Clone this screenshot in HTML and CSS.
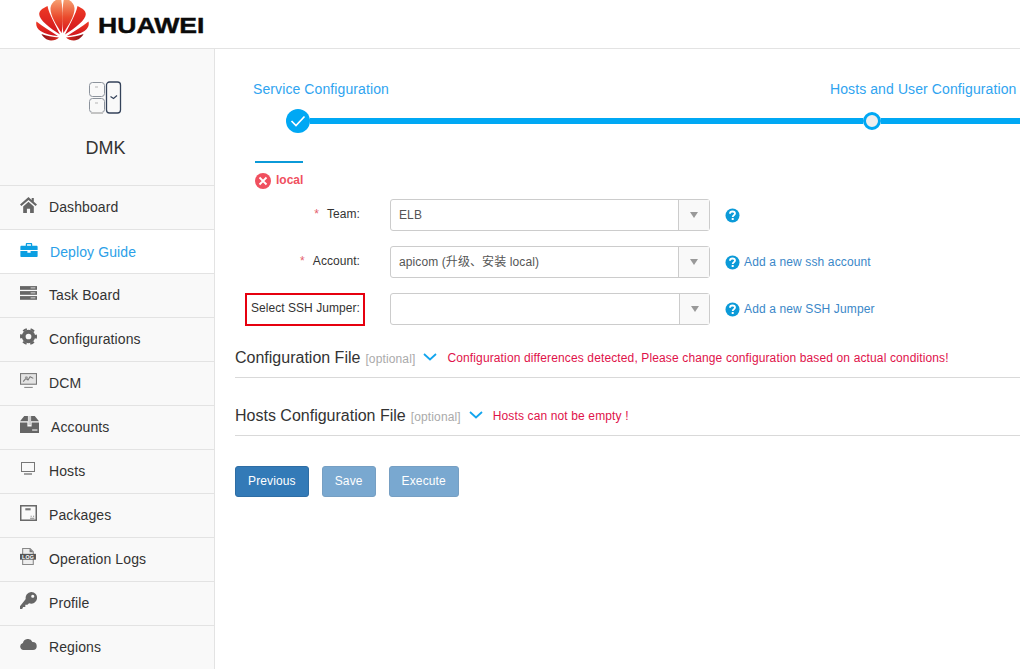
FILE: index.html
```html
<!DOCTYPE html>
<html lang="en">

<head>
	<meta name="viewport" content="width=device-width, initial-scale=1">
	<meta charset="utf-8">
	<title>DMK</title>
	<link rel="stylesheet" href="styles.css">
</head>

<body>
	<header class="topbar">
		<svg class="logo-mark" width="54" height="41" viewBox="0 0 54 41">
			<defs>
				<linearGradient id="petal-top" x1="0" y1="0" x2="0" y2="1">
					<stop offset="0" stop-color="#f7a878"></stop>
					<stop offset="0.55" stop-color="#ea4a2c"></stop>
					<stop offset="1" stop-color="#d8141c"></stop>
				</linearGradient>
				<linearGradient id="petal-mid" x1="0" y1="0" x2="0" y2="1">
					<stop offset="0" stop-color="#ee3a26"></stop>
					<stop offset="1" stop-color="#d0141c"></stop>
				</linearGradient>
				<linearGradient id="petal-low" x1="0" y1="0" x2="1" y2="0">
					<stop offset="0" stop-color="#8a0f14"></stop>
					<stop offset="1" stop-color="#e02a20"></stop>
				</linearGradient>
				<g id="petals">
					<path fill="url(#petal-top)" d="M25.600 33C20 25 14 15 14.500 8 15 3 19-0.500 25-2 26.800 8 27.300 22 25.600 33Z"></path>
					<path fill="url(#petal-mid)" d="M24 34.500C14 28 3 20 3.200 14 3.300 11 6 8.500 11.500 6 13 14 20 26 24 34.500Z"></path>
					<path fill="url(#petal-mid)" d="M22 36C14 31 7 26.500 .5 21.500-.5 25 1 28.500 4.500 31 9 34 16 35.800 22 36Z"></path>
					<path fill="url(#petal-low)" d="M23 37.500C17 37 10 36 5.500 34 7 37 10.500 40.300 15 40.500 18 40.600 21 39.500 23 37.500Z"></path>
				</g>
			</defs>
			<use href="#petals"></use>
			<use href="#petals" transform="matrix(-1 0 0 1 53 0)"></use>
		</svg>
		<span class="logo-word">HUAWEI</span>
	</header>

	<div class="layout">
		<aside class="sidebar">
			<div class="brand">
				<svg width="34" height="33" viewBox="0 0 34 33" fill="none">
					<rect x=".5" y="1.500" width="15" height="14" rx="3" stroke="#8c939c"></rect>
					<rect x=".5" y="17.500" width="15" height="14" rx="3" stroke="#8c939c"></rect>
					<path d="M2 32h12" stroke="#c4c4c4" stroke-width="2"></path>
					<path d="M6 6h3M6 22h3" stroke="#b5b5b5"></path>
					<rect x="17.500" y="1" width="14" height="31" rx="3" stroke="#34425a" stroke-width="1.300"></rect>
					<path d="M21.500 15.500l3 2 3.500-3" stroke="#34425a" stroke-width="1.200"></path>
				</svg>
				<div class="brand-name">DMK</div>
			</div>
			<ul class="nav">
				<li>
					<a href="#">
						<svg width="17" height="16" viewBox="0 0 16 15" fill="#666">
							<path d="M8 0L0 7l1.300 1.500L8 2.700l6.700 5.800L16 7l-3-2.600V1h-2v1.700z"></path>
							<path d="M3 9l5-4.500L13 9v6H9.500v-4h-3v4H3z"></path>
						</svg>
						Dashboard
					</a>
				</li>
				<li class="active">
					<a href="#">
						<svg width="18" height="14" viewBox="0 0 16 13" fill="#0b9fe2">
							<path d="M5 2.500V1c0-.6.400-1 1-1h4c.6 0 1 .4 1 1v1.500h4c.6 0 1 .4 1 1V6.500H0v-3c0-.6.400-1 1-1zm1.200 0h3.600V1.200H6.200z"></path>
							<path d="M0 7.500h6.500V9h3V7.500H16V12c0 .6-.4 1-1 1H1c-.6 0-1-.4-1-1z"></path>
						</svg>
						Deploy Guide
					</a>
				</li>
				<li>
					<a href="#">
						<svg width="17" height="14" viewBox="0 0 16 13" fill="#666">
							<rect width="16" height="3.500"></rect>
							<rect y="4.700" width="16" height="3.500"></rect>
							<rect y="9.400" width="16" height="3.500"></rect>
							<path d="M10 1.700h4.500M10 6.400h4.500M10 11.100h4.500" stroke="#eee" stroke-width=".8"></path>
						</svg>
						Task Board
					</a>
				</li>
				<li>
					<a href="#">
						<svg width="17" height="17" viewBox="0 0 16 16" fill="none" stroke="#666">
							<circle cx="8" cy="8" r="4.500" stroke-width="3.600"></circle>
							<circle cx="8" cy="8" r="7" stroke-width="2" stroke-dasharray="3.800 3.530" stroke-dashoffset="1.900"></circle>
						</svg>
						Configurations
					</a>
				</li>
				<li>
					<a href="#">
						<svg width="17" height="15" viewBox="0 0 16 14">
							<rect x=".5" y=".5" width="15" height="10" fill="#e4e4e4" stroke="#777"></rect>
							<path d="M3 8l2.500-3 2 1.500 2-3 3 1.500" fill="none" stroke="#777"></path>
							<circle cx="6" cy="4.500" r="1.500" fill="#999"></circle>
							<path d="M4 13.500h8" stroke="#888"></path>
						</svg>
						DCM
					</a>
				</li>
				<li>
					<a href="#">
						<svg width="19" height="17" viewBox="0 0 18 16" fill="#666">
							<path d="M4 0h3.500v5H0zM10.500 0H14l4 5h-7.500z"></path>
							<path d="M0 6h7v4h4V6h7v10H0z"></path>
							<path d="M8.200 0h.8v8.500h-.8zM10 0h-.5v8.500h.5z" fill="#aaa"></path>
							<rect x="11.500" y="12.500" width="5" height="1.500" fill="#ccc"></rect>
						</svg>
						Accounts
					</a>
				</li>
				<li>
					<a href="#">
						<svg width="17" height="13" viewBox="0 0 17 13" fill="none" stroke="#666">
							<rect x="1.500" y=".5" width="13" height="9" stroke="#777"></rect>
							<path d="M4 12h8" stroke-width="1.200"></path>
						</svg>
						Hosts
					</a>
				</li>
				<li>
					<a href="#">
						<svg width="17" height="16" viewBox="0 0 16 15" fill="none">
							<rect x=".7" y=".7" width="14.600" height="13.600" stroke="#666" stroke-width="1.400"></rect>
							<rect x="5" y="3" width="5" height="2" fill="#777"></rect>
							<path d="M10 10.500h1M12.300 10.500h1M9.500 12.500h4" stroke="#888"></path>
						</svg>
						Packages
					</a>
				</li>
				<li>
					<a href="#">
						<svg width="17" height="17" viewBox="0 0 16 16">
							<path d="M2.500.5H9.500L12.500 3.500V15.500H2.500z" fill="#eee" stroke="#888"></path>
							<path d="M9 .5V4h3.500z" fill="#777"></path>
							<rect y="5.500" width="15" height="5.500" fill="#555"></rect>
							<text class="log-tag" x="7.500" y="10">LOG</text>
						</svg>
						Operation Logs
					</a>
				</li>
				<li>
					<a href="#">
						<svg width="17" height="17" viewBox="0 0 16 16" fill="#666">
							<path fill-rule="evenodd" d="M10.500 0a5.500 5.500 0 1 1-2 10.600L7 12H5v2H3l-1 2H0v-2.500l5.400-6.900A5.500 5.500 0 0 1 10.500 0zm1.500 2.500a1.500 1.500 0 1 0 0 3 1.500 1.500 0 0 0 0-3z"></path>
						</svg>
						Profile
					</a>
				</li>
				<li>
					<a href="#">
						<svg width="17" height="11" viewBox="0 0 17 11" fill="#666">
							<path d="M3.500 11a3.500 3.500 0 0 1-.6-6.900A5 5 0 0 1 12.400 3 4 4 0 0 1 13 11z"></path>
						</svg>
						Regions
					</a>
				</li>
			</ul>
		</aside>

		<main class="content">
			<div class="step-labels">
				<span>Service Configuration</span>
				<span>Hosts and User Configuration</span>
			</div>
			<div class="step-track">
				<span class="step-done">
					<svg width="16" height="12" viewBox="0 0 16 12" fill="none" stroke="#fff" stroke-width="1.700">
						<path d="M1.500 6l4.500 4.500L14.500 1.500"></path>
					</svg>
				</span>
				<span class="step-line step-line-first"></span>
				<span class="step-current"></span>
				<span class="step-line"></span>
			</div>

			<div class="host-tab">
				<svg width="16" height="16" viewBox="0 0 16 16">
					<circle cx="8" cy="8" r="8" fill="#f0505f"></circle>
					<path d="M4.500 4.500l7 7M11.500 4.500l-7 7" stroke="#fff" stroke-width="1.800"></path>
				</svg>
				<span class="host-name">local</span>
			</div>

			<form class="host-form">
				<div class="form-row">
					<label class="form-label"><span class="required">*</span>Team:</label>
					<div class="select">
						<span class="select-value">ELB</span>
						<span class="select-arrow"></span>
					</div>
					<span class="form-help">
						<svg class="help-icon" width="15" height="15" viewBox="0 0 15 15">
							<circle cx="7.500" cy="7.500" r="7" fill="#0b9ad8"></circle>
							<path d="M5 5.800C5 4.300 6.100 3.500 7.500 3.500S10 4.300 10 5.600C10 7.300 7.700 7.300 7.700 9" fill="none" stroke="#fff" stroke-width="1.800"></path>
							<rect x="6.700" y="10" width="2" height="2" fill="#fff"></rect>
						</svg>
					</span>
				</div>
				<div class="form-row">
					<label class="form-label"><span class="required">*</span>Account:</label>
					<div class="select">
						<span class="select-value">apicom (升级、安装 local)</span>
						<span class="select-arrow"></span>
					</div>
					<a class="form-help" href="#">
						<svg class="help-icon" width="15" height="15" viewBox="0 0 15 15">
							<circle cx="7.500" cy="7.500" r="7" fill="#0b9ad8"></circle>
							<path d="M5 5.800C5 4.300 6.100 3.500 7.500 3.500S10 4.300 10 5.600C10 7.300 7.700 7.300 7.700 9" fill="none" stroke="#fff" stroke-width="1.800"></path>
							<rect x="6.700" y="10" width="2" height="2" fill="#fff"></rect>
						</svg>
						Add a new ssh account
					</a>
				</div>
				<div class="form-row">
					<label class="form-label"><span class="label-marked">Select SSH Jumper:</span></label>
					<div class="select select-empty">
						<span class="select-value"></span>
						<span class="select-arrow"></span>
					</div>
					<a class="form-help" href="#">
						<svg class="help-icon" width="15" height="15" viewBox="0 0 15 15">
							<circle cx="7.500" cy="7.500" r="7" fill="#0b9ad8"></circle>
							<path d="M5 5.800C5 4.300 6.100 3.500 7.500 3.500S10 4.300 10 5.600C10 7.300 7.700 7.300 7.700 9" fill="none" stroke="#fff" stroke-width="1.800"></path>
							<rect x="6.700" y="10" width="2" height="2" fill="#fff"></rect>
						</svg>
						Add a new SSH Jumper
					</a>
				</div>
			</form>

			<section class="file-section">
				<h2>Configuration File</h2>
				<span class="optional">[optional]</span>
				<svg class="chevron" width="14" height="8" viewBox="0 0 14 8" fill="none" stroke="#12a5ee" stroke-width="1.800">
					<path d="M1 1l6 5.500L13 1"></path>
				</svg>
				<span class="file-error">Configuration differences detected, Please change configuration based on actual conditions!</span>
			</section>
			<section class="file-section">
				<h2>Hosts Configuration File</h2>
				<span class="optional">[optional]</span>
				<svg class="chevron" width="14" height="8" viewBox="0 0 14 8" fill="none" stroke="#12a5ee" stroke-width="1.800">
					<path d="M1 1l6 5.500L13 1"></path>
				</svg>
				<span class="file-error">Hosts can not be empty !</span>
			</section>

			<div class="actions">
				<button type="button" class="btn">Previous</button>
				<button type="button" class="btn btn-disabled">Save</button>
				<button type="button" class="btn btn-disabled">Execute</button>
			</div>
		</main>
	</div>
</body>

</html>
```

FILE: styles.css
```css
* {
	box-sizing: border-box;
}

html,
body {
	margin: 0;
	height: 100%;
	overflow: hidden;
	background-color: #fff;
	color: #333;
	font-family: "Liberation Sans", "Noto Sans CJK SC", sans-serif;
}

/* top bar */
.topbar {
	display: flex;
	align-items: flex-start;
	gap: 8px;
	height: 49px;
	padding-left: 36px;
	border-bottom: 1px solid #e3e3e3;
	overflow: hidden;
}

.logo-word {
	margin-top: 13px;
	font-size: 22px;
	line-height: 26px;
	font-weight: 700;
	color: #0b0b0b;
	-webkit-text-stroke: .4px #0b0b0b;
	transform: scaleX(1.21);
	transform-origin: left center;
}

.layout {
	display: grid;
	grid-template-columns: 215px 1fr;
	height: 620px;
}

/* sidebar */
.sidebar {
	background-color: #f9f9f9;
	border-right: 1px solid #e3e3e3;
}

.brand {
	display: flex;
	flex-direction: column;
	align-items: center;
	height: 136px;
	padding: 32px 3px 0 0;
}

.brand-name {
	margin-top: 23px;
	font-size: 18px;
	line-height: 22px;
}

.nav {
	list-style: none;
	margin: 0;
	padding: 0;
}

.nav li {
	height: 44px;
	border-top: 1px solid #e3e3e3;
}

.nav a {
	display: flex;
	align-items: center;
	gap: 12px;
	height: 100%;
	padding: 0 0 2px 20px;
	font-size: 14px;
	letter-spacing: .1px;
	color: #333;
	text-decoration: none;
}

.nav svg {
	margin-bottom: 4px;
}

.nav .active {
	background-color: #fff;
}

.nav .active a {
	padding-bottom: 0;
	color: #2b9fe8;
}

.log-tag {
	font-size: 5px;
	font-weight: 700;
	fill: #fff;
	text-anchor: middle;
}

/* steps */
.content {
	padding: 30px 0 0 20px;
	overflow: hidden;
}

.step-labels {
	display: flex;
	gap: 441px;
	margin-left: 18px;
	font-size: 14px;
	line-height: 20px;
	letter-spacing: .1px;
	color: #2fa4f0;
	white-space: nowrap;
}

.step-track {
	display: flex;
	align-items: center;
	height: 24px;
	margin: 10px 0 0 51px;
}

.step-done {
	display: flex;
	align-items: center;
	justify-content: center;
	flex: none;
	width: 24px;
	height: 24px;
	border-radius: 50%;
	background-color: #00a8f4;
}

.step-line {
	flex: 1;
	height: 6px;
	background-color: #00a8f4;
}

.step-line-first {
	flex: none;
	width: 553px;
}

.step-current {
	flex: none;
	width: 18px;
	height: 18px;
	border: 3px solid #00a8f4;
	border-radius: 50%;
	background-color: #eee;
}

/* host tab */
.host-tab {
	display: flex;
	align-items: flex-start;
	gap: 5px;
	width: fit-content;
	margin: 28px 0 0 20px;
	padding-top: 10px;
	border-top: 2px solid #0b9ad8;
	font-size: 12px;
	font-weight: 700;
	color: #f0505f;
}

.host-name {
	line-height: 14px;
}

/* form */
.host-form {
	display: flex;
	flex-direction: column;
	gap: 15px;
	margin-top: 10px;
}

.form-row {
	display: flex;
	align-items: center;
	height: 32px;
	font-size: 12px;
}

.form-label {
	display: flex;
	justify-content: flex-end;
	flex: none;
	width: 125px;
	margin: 0 30px 2px 0;
	line-height: 15px;
	letter-spacing: .06px;
}

.required {
	margin-right: 8px;
	color: #e4606d;
}

.label-marked {
	margin: 2px -5px 0 0;
	padding: 6px 3px 8px 4px;
	border: 2px solid #e6000f;
	white-space: nowrap;
}

.select {
	display: flex;
	flex: none;
	width: 320px;
	height: 32px;
	border: 1px solid #ccc;
	border-radius: 3px;
	color: #555;
}

.select-value {
	flex: 1;
	padding-left: 8px;
	line-height: 31px;
	letter-spacing: .1px;
}

.select-arrow {
	display: flex;
	align-items: center;
	justify-content: center;
	flex: none;
	width: 31px;
	border-left: 1px solid #ccc;
	background-color: #f9f9f9;
}

.select-empty .select-arrow {
	width: 30px;
}

.select-arrow:after {
	content: "";
	border-top: 6px solid #999;
	border-left: 4px solid transparent;
	border-right: 4px solid transparent;
}

.form-help {
	display: flex;
	align-items: center;
	gap: 4px;
	margin-left: 15px;
	letter-spacing: .13px;
	color: #3a87c8;
	text-decoration: none;
	white-space: nowrap;
}

/* config files */
.file-section {
	display: flex;
	align-items: baseline;
	height: 39px;
	margin-top: 19px;
	border-bottom: 1px solid #d9d9d9;
	line-height: 38px;
	white-space: nowrap;
}

.host-form + .file-section {
	margin-top: 14px;
}

.file-section h2 {
	margin: 0;
	font-size: 16px;
	font-weight: 400;
}

.optional {
	margin-left: 5px;
	font-size: 12px;
	letter-spacing: .13px;
	color: #aaa;
}

.chevron {
	align-self: center;
	margin: 0 9px 3px 8px;
}

.file-error {
	align-self: flex-start;
	margin-left: 1px;
	font-size: 12px;
	line-height: 38px;
	letter-spacing: .13px;
	color: #e0124a;
}

/* buttons */
.actions {
	display: flex;
	gap: 13px;
	margin-top: 30px;
}

.btn {
	height: 31px;
	padding: 0 12px 1px;
	border: 1px solid #2e6da4;
	border-radius: 3px;
	background-color: #337ab7;
	color: #fff;
	font-family: inherit;
	font-size: 12px;
	letter-spacing: .13px;
}

.btn-disabled {
	opacity: .65;
}
```
